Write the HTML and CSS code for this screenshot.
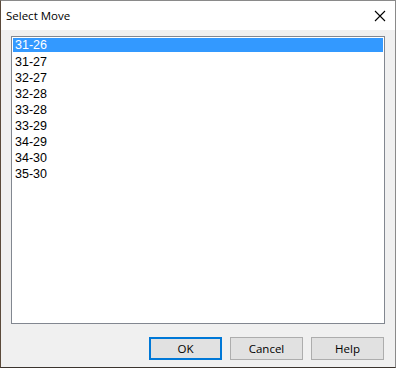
FILE: index.html
```html
<!DOCTYPE html>
<html lang="en">
<head>
  <meta charset="UTF-8">
  <title>Select Move</title>
  <link rel="stylesheet" href="styles.css">
</head>
<body>

  <div class="window">
    <div class="titlebar">
      <span class="title">Select Move</span>
      <span class="close">
        <svg width="12" height="12" viewBox="0 0 12 12">
          <path d="M1 1 L11 11 M11 1 L1 11" stroke="#000" stroke-width="1.1" fill="none" />
        </svg>
      </span>
    </div>

    <div class="client">
      <ul class="listbox">
        <li class="selected">31-26</li>
        <li>31-27</li>
        <li>32-27</li>
        <li>32-28</li>
        <li>33-28</li>
        <li>33-29</li>
        <li>34-29</li>
        <li>34-30</li>
        <li>35-30</li>
      </ul>

      <div class="buttons">
        <button type="button" class="default">OK</button>
        <button type="button">Cancel</button>
        <button type="button">Help</button>
      </div>
    </div>
  </div>

</body>
</html>
```

FILE: styles.css
```css
html, body {
  margin: 0;
  padding: 0;
  background-color: #4a3d32;
}

.window {
  width: 396px;
  height: 368px;
  box-sizing: border-box;
  border: 1px solid #8a8a8a;
  border-left-color: #5b4a3b;
  border-bottom-color: #3b342e;
  background-color: #f0f0f0;
  display: flex;
  flex-direction: column;
  font-family: "Open Sans", "Noto Sans", sans-serif;
}

.titlebar {
  height: 29px;
  background-color: #ffffff;
  display: flex;
  align-items: center;
  justify-content: space-between;
  padding: 0 9px 0 5px;
}

.title {
  font-size: 11.5px;
  color: #000;
}

.close {
  display: flex;
}

.client {
  flex: 1;
  display: flex;
  flex-direction: column;
  padding: 6px 10px 7px 10px;
}

.listbox {
  flex: 1;
  margin: 0;
  padding: 1px;
  list-style: none;
  background-color: #fff;
  border: 1px solid #828790;
  font-family: "Liberation Sans", Arial, sans-serif;
  font-size: 12.5px;
  color: #000;
}

.listbox li {
  height: 16px;
  line-height: 16px;
  padding-left: 2px;
}

.listbox li.selected {
  background-color: #3399ff;
  color: #fff;
  height: 14px;
  line-height: 14px;
  margin-bottom: 2px;
}

.buttons {
  display: flex;
  justify-content: flex-end;
  gap: 8px;
  margin-top: 13px;
  padding-right: 1px;
}

.buttons button {
  width: 73px;
  height: 23px;
  box-sizing: border-box;
  background-color: #e1e1e1;
  border: 1px solid #adadad;
  font-family: "Open Sans", "Noto Sans", sans-serif;
  font-size: 11.5px;
  color: #000;
  padding: 0;
}

.buttons button.default {
  border: 2px solid #0078d7;
}
```
